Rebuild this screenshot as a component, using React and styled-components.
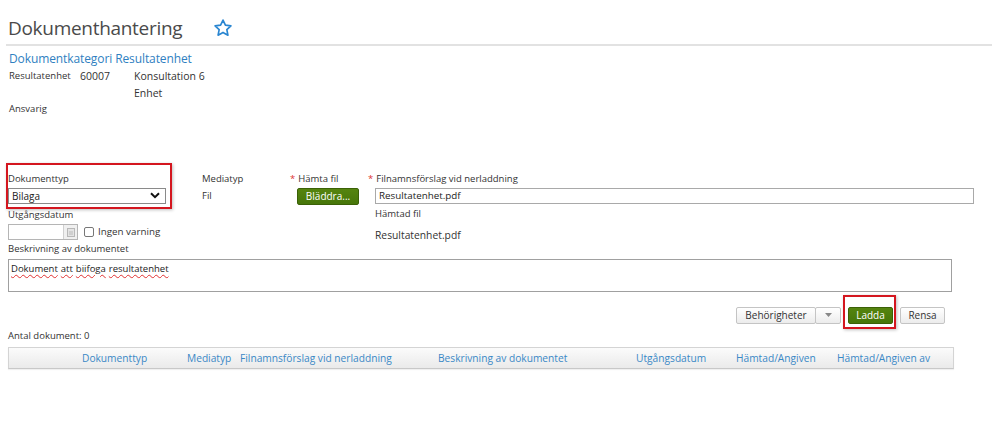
import React from "react";
import styled, { createGlobalStyle } from "styled-components";

const Global = createGlobalStyle`
  html, body { margin: 0; padding: 0; background: #fff; }
  body { font-family: "Open Sans", "Noto Sans", sans-serif; color: #333; font-size: 10px; }
  * { box-sizing: border-box; }
`;

const Page = styled.div`
  width: 998px;
  height: 427px;
  padding: 13px 8px 0 8px;
  position: relative;
`;

const Header = styled.div`
  display: flex;
  align-items: center;
  gap: 31px;
  height: 30px;
`;

const Title = styled.h1`
  margin: 0;
  font-size: 19px;
  font-weight: 400;
  color: #4a4a4a;
  letter-spacing: -0.3px;
  line-height: 30px;
`;

const Rule = styled.div`
  height: 2px;
  background: #e2e2e2;
  margin: 1px -2px 0 -2px;
  width: 986px;
`;

const Section = styled.h2`
  margin: 4px 0 0 1px;
  font-size: 12px;
  font-weight: 400;
  color: #2f7fc1;
  letter-spacing: -0.1px;
  line-height: 18px;
`;

const InfoGrid = styled.div`
  display: grid;
  grid-template-columns: 71px 54px auto;
  grid-auto-rows: 16.5px;
  margin-left: 1px;
  line-height: 16px;
  color: #333;
`;

const InfoText = styled.span`
  font-size: ${(p) => (p.$small ? 9.5 : 10.5)}px;
`;

const FormRow = styled.div`
  display: flex;
  margin-top: 54px;
`;

const Col = styled.div`
  width: ${(p) => p.$w}px;
  display: flex;
  flex-direction: column;
`;

const Label = styled.div`
  font-size: 9.5px;
  line-height: 14px;
  color: #333;
  white-space: nowrap;
  margin-top: ${(p) => p.$mt || 0}px;
`;

const Req = styled.span`
  color: #d33;
  margin-right: 3px;
`;

const Value = styled.div`
  font-size: ${(p) => p.$fs || 9.5}px;
  line-height: 14px;
  margin-top: ${(p) => p.$mt || 0}px;
  color: #333;
`;

const Indent = styled.div`
  padding-left: 7px;
  margin-top: 2px;
`;

const Highlight = styled.div`
  position: relative;
  &::after {
    content: "";
    position: absolute;
    left: ${(p) => p.$l}px;
    top: ${(p) => p.$t}px;
    right: ${(p) => p.$r}px;
    bottom: ${(p) => p.$b}px;
    border: 2px solid #d4161f;
    box-shadow: 1px 1px 3px rgba(0, 0, 0, 0.25);
    pointer-events: none;
  }
`;

const SelectBox = styled.div`
  width: 158px;
  height: 16px;
  border: 1px solid #8a8a8a;
  display: flex;
  align-items: center;
  justify-content: space-between;
  padding: 0 5px 0 3px;
  font-size: 10px;
  color: #222;
  background: #fff;
  margin-top: 2px;
`;

const TextInput = styled.div`
  height: 16px;
  border: 1px solid #a9a9a9;
  width: ${(p) => p.$w}px;
  font-size: 9.8px;
  line-height: 14px;
  padding-left: 3px;
  color: #222;
  background: #fff;
`;

const GreenButton = styled.button`
  font-family: inherit;
  background: linear-gradient(#55840f, #47760a);
  border: 1px solid #3b6107;
  border-radius: 2px;
  color: #fff;
  font-size: 10px;
  height: 17px;
  width: ${(p) => p.$w}px;
  padding: 0;
  line-height: 14px;
  cursor: pointer;
`;

const DateRow = styled.div`
  display: flex;
  align-items: center;
  margin-top: 2px;
  gap: 6px;
`;

const DateBox = styled.div`
  width: 70px;
  height: 16px;
  border: 1px solid #b5b5b5;
  display: flex;
  justify-content: flex-end;
`;

const CalBtn = styled.div`
  width: 14px;
  height: 100%;
  border-left: 1px solid #d0d0d0;
  background: #f0f0f0;
  display: flex;
  align-items: center;
  justify-content: center;
`;

const Check = styled.span`
  width: 10px;
  height: 10px;
  border: 1px solid #777;
  border-radius: 2px;
  display: inline-block;
  margin-right: 4px;
`;

const CheckLabel = styled.label`
  display: flex;
  align-items: center;
  font-size: 9.8px;
  color: #333;
`;

const TextArea = styled.div`
  width: 944px;
  height: 33px;
  border: 1px solid #a0a0a0;
  margin-top: 3px;
  padding: 2px 2px;
  font-size: 9.5px;
  line-height: 14px;
  color: #222;
  display: flex;
  gap: 3px;
`;

const Spell = styled.span`
  text-decoration: underline wavy #e03030;
  text-decoration-thickness: 1px;
  text-underline-offset: 2px;
`;

const ActionBar = styled.div`
  display: flex;
  justify-content: flex-end;
  align-items: center;
  width: 937px;
  margin-top: 15px;
  gap: 7px;
`;

const Split = styled.div`
  display: flex;
`;

const GreyButton = styled.button`
  font-family: inherit;
  background: linear-gradient(#ffffff, #ececec);
  border: 1px solid #c4c4c4;
  border-radius: 2px;
  color: #333;
  font-size: 10px;
  height: 17px;
  width: ${(p) => p.$w}px;
  padding: 0;
  line-height: 14px;
  display: flex;
  align-items: center;
  justify-content: center;
  & + & { margin-left: -1px; }
`;

const Count = styled.div`
  font-size: 9.5px;
  color: #333;
  margin-top: 5px;
  line-height: 14px;
`;

const TableHead = styled.div`
  width: 946px;
  height: 22px;
  margin-top: 4px;
  border: 1px solid #d4d4d4;
  border-bottom-color: #c8c8c8;
  background: linear-gradient(#fbfbfb, #eaeaea);
  display: grid;
  grid-template-columns: 73px 105px 53px 198px 198px 100px 101px 1fr;
  align-items: center;
  box-shadow: 0 1px 1px rgba(0, 0, 0, 0.06);
`;

const Th = styled.div`
  color: #3a88c6;
  font-size: 10.2px;
  white-space: nowrap;
`;

const Star = () => (
  <svg width="20" height="20" viewBox="0 0 24 24" fill="none" stroke="#2a86d1" strokeWidth="2" strokeLinejoin="round">
    <path d="M12 2.5l2.9 6.1 6.6.8-4.9 4.6 1.3 6.6L12 17.3l-5.9 3.3 1.3-6.6L2.5 9.4l6.6-.8z" />
  </svg>
);

const Chevron = () => (
  <svg width="10" height="7" viewBox="0 0 10 7">
    <path d="M1 1.2l4 4 4-4" stroke="#111" strokeWidth="2" fill="none" />
  </svg>
);

const Caret = () => (
  <svg width="7" height="4" viewBox="0 0 7 4">
    <path d="M0 0h7L3.5 4z" fill="#888" />
  </svg>
);

const CalIcon = () => (
  <svg width="8" height="10" viewBox="0 0 8 10">
    <rect x="0.5" y="1.5" width="7" height="8" fill="#e4e4e4" stroke="#b8b8b8" />
    <rect x="2" y="4" width="4" height="4" fill="#cfcfcf" />
  </svg>
);

export default function App() {
  return (
    <>
      <Global />
      <Page>
        <Header>
          <Title>Dokumenthantering</Title>
          <Star />
        </Header>
        <Rule />
        <Section>Dokumentkategori Resultatenhet</Section>
        <InfoGrid>
          <InfoText $small>Resultatenhet</InfoText>
          <InfoText>60007</InfoText>
          <InfoText>Konsultation 6</InfoText>
          <span />
          <span />
          <InfoText>Enhet</InfoText>
          <InfoText $small>Ansvarig</InfoText>
        </InfoGrid>

        <FormRow>
          <Col $w={194}>
            <Highlight $l={-2} $t={-9} $r={30} $b={-5}>
              <Label>Dokumenttyp</Label>
              <SelectBox>
                <span>Bilaga</span>
                <Chevron />
              </SelectBox>
            </Highlight>
            <Label $mt={4}>Utgångsdatum</Label>
            <DateRow>
              <DateBox>
                <CalBtn>
                  <CalIcon />
                </CalBtn>
              </DateBox>
              <CheckLabel>
                <Check />
                Ingen varning
              </CheckLabel>
            </DateRow>
          </Col>
          <Col $w={88}>
            <Label>Mediatyp</Label>
            <Value $mt={3}>Fil</Value>
          </Col>
          <Col $w={78}>
            <Label>
              <Req>*</Req>Hämta fil
            </Label>
            <Indent>
              <GreenButton $w={62}>Bläddra...</GreenButton>
            </Indent>
          </Col>
          <Col $w={606}>
            <Label>
              <Req>*</Req>Filnamnsförslag vid nerladdning
            </Label>
            <Indent>
              <TextInput $w={599}>Resultatenhet.pdf</TextInput>
              <Value $mt={3}>Hämtad fil</Value>
              <Value $mt={7} $fs={10.3}>Resultatenhet.pdf</Value>
            </Indent>
          </Col>
        </FormRow>

        <Label $mt={0}>Beskrivning av dokumentet</Label>
        <TextArea>
          <Spell>Dokument</Spell>
          <Spell>att</Spell>
          <Spell>biifoga</Spell>
          <Spell>resultatenhet</Spell>
        </TextArea>

        <ActionBar>
          <Split>
            <GreyButton $w={80}>Behörigheter</GreyButton>
            <GreyButton $w={26}>
              <Caret />
            </GreyButton>
          </Split>
          <Highlight $l={-5} $t={-12} $r={-3} $b={-5}>
            <GreenButton $w={45}>Ladda</GreenButton>
          </Highlight>
          <GreyButton $w={45}>Rensa</GreyButton>
        </ActionBar>

        <Count>Antal dokument: 0</Count>
        <TableHead>
          <span />
          <Th>Dokumenttyp</Th>
          <Th>Mediatyp</Th>
          <Th>Filnamnsförslag vid nerladdning</Th>
          <Th>Beskrivning av dokumentet</Th>
          <Th>Utgångsdatum</Th>
          <Th>Hämtad/Angiven</Th>
          <Th>Hämtad/Angiven av</Th>
        </TableHead>
      </Page>
    </>
  );
}
